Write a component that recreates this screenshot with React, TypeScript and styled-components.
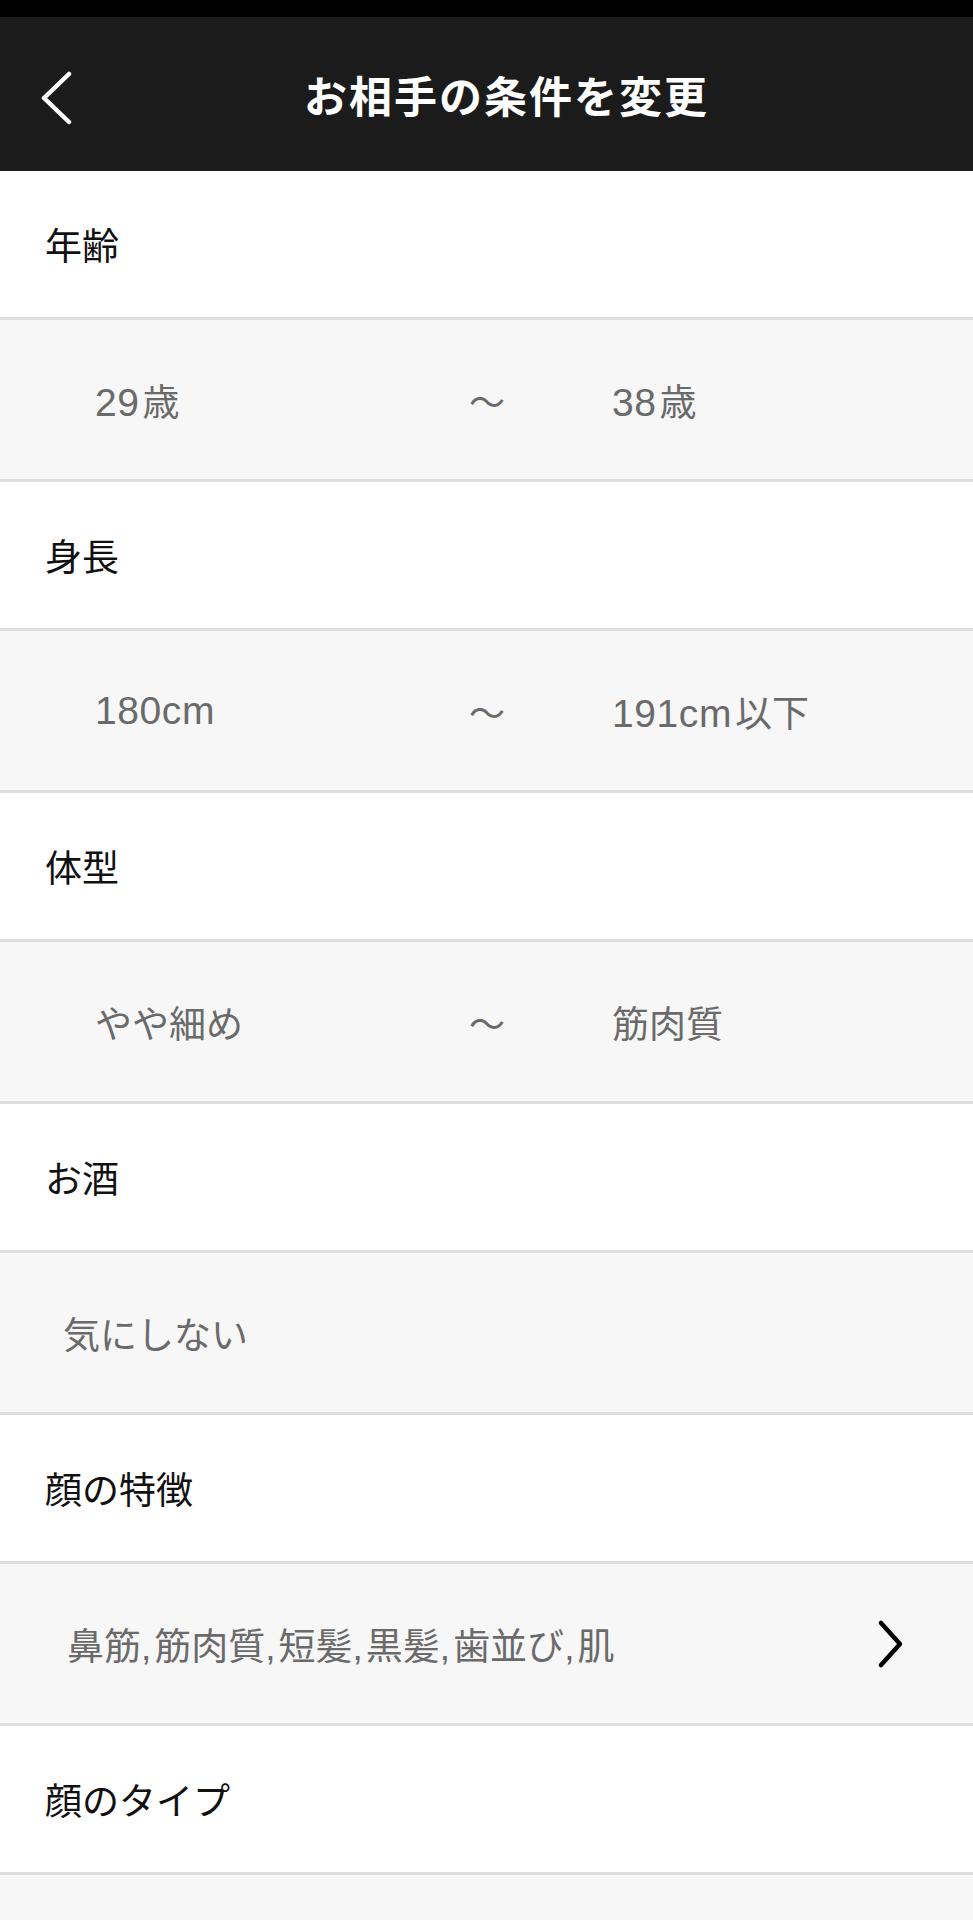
import React from "react";
import styled, { createGlobalStyle } from "styled-components";

const GlobalStyle = createGlobalStyle`
  html, body {
    margin: 0;
    padding: 0;
    background: #f7f7f7;
  }
  body {
    font-family: "Liberation Sans", "Noto Sans CJK JP", sans-serif;
  }
  * { box-sizing: border-box; }
`;

const Page = styled.div`
  width: 973px;
  min-height: 1920px;
  background: #f7f7f7;
  display: flex;
  flex-direction: column;
`;

const StatusBar = styled.div`
  height: 17px;
  background: #000;
`;

const Header = styled.header`
  height: 154px;
  background: #1b1b1b;
  display: grid;
  grid-template-columns: 130px 1fr 90px;
  align-items: center;
`;

const BackButton = styled.button`
  background: none;
  border: none;
  padding: 0 0 0 38px;
  height: 100%;
  display: flex;
  align-items: center;
  cursor: pointer;
  svg { margin-top: 8px; }
`;

const Title = styled.h1`
  margin: 0;
  text-align: center;
  color: #fff;
  font-family: "Noto Sans CJK JP", sans-serif;
  font-weight: 700;
  font-size: 43px;
  letter-spacing: 2px;
  line-height: 1;
`;

const LabelRow = styled.div`
  height: 149px;
  background: #fff;
  border-bottom: 3px solid #dedede;
  display: flex;
  align-items: center;
  padding-left: 45px;
  font-size: 37px;
  color: #111;
  font-family: "Noto Sans CJK JP", sans-serif;
`;

const ValueRow = styled.div<{ $indent: number }>`
  height: 162px;
  background: #f7f7f7;
  border-bottom: 3px solid #dedede;
  display: flex;
  align-items: center;
  padding-left: ${(p) => p.$indent}px;
  padding-right: 68px;
  font-size: 37px;
  color: #6a6a6a;
`;

const RangeFrom = styled.span`
  width: 374px;
`;

const Tilde = styled.span`
  font-family: "Noto Sans CJK JP", sans-serif;
  font-size: 36px;
  width: 143px;
`;

const RangeTo = styled.span``;

const Num = styled.span`
  font-family: "Liberation Sans", sans-serif;
  font-size: 39px;
  letter-spacing: 0.6px;
  margin-right: 3px;
`;

const SingleValue = styled.span`
  flex: 1;
  font-family: "Noto Sans CJK JP", sans-serif;
`;

const Comma = styled.span`
  font-family: "Liberation Sans", sans-serif;
  margin-right: 3px;
`;

const Chevron = () => (
  <svg width="30" height="50" viewBox="0 0 30 50" fill="none">
    <polyline
      points="6,4 25,25 6,46"
      stroke="#000"
      strokeWidth="4.5"
      strokeLinecap="round"
      strokeLinejoin="round"
    />
  </svg>
);

const BackIcon = () => (
  <svg width="34" height="54" viewBox="0 0 34 54" fill="none">
    <polyline
      points="31,3 6,27 31,51"
      stroke="#fff"
      strokeWidth="4.5"
      strokeLinecap="round"
      strokeLinejoin="round"
    />
  </svg>
);

// Render a value where Latin digits/units use the larger Latin face.
const RangeText = ({ text }: { text: string }) => {
  const m = text.match(/^([0-9a-z]+)(.*)$/);
  if (!m) return <>{text}</>;
  return (
    <>
      <Num>{m[1]}</Num>
      {m[2].trim()}
    </>
  );
};

type Condition =
  | { label: string; kind: "range"; from: string; to: string }
  | { label: string; kind: "single"; values: string[]; indent: number; more?: boolean }
  | { label: string; kind: "empty" };

const conditions: Condition[] = [
  { label: "年齢", kind: "range", from: "29歳", to: "38歳" },
  { label: "身長", kind: "range", from: "180cm", to: "191cm以下" },
  { label: "体型", kind: "range", from: "やや細め", to: "筋肉質" },
  { label: "お酒", kind: "single", values: ["気にしない"], indent: 63 },
  {
    label: "顔の特徴",
    kind: "single",
    values: ["鼻筋", "筋肉質", "短髪", "黒髪", "歯並び", "肌"],
    indent: 67,
    more: true,
  },
  { label: "顔のタイプ", kind: "empty" },
];

export default function App() {
  return (
    <>
      <GlobalStyle />
      <Page>
        <StatusBar />
        <Header>
          <BackButton aria-label="戻る">
            <BackIcon />
          </BackButton>
          <Title>お相手の条件を変更</Title>
          <div />
        </Header>
        {conditions.map((c) => (
          <React.Fragment key={c.label}>
            <LabelRow>{c.label}</LabelRow>
            {c.kind === "range" && (
              <ValueRow $indent={95}>
                <RangeFrom>
                  <RangeText text={c.from} />
                </RangeFrom>
                <Tilde>～</Tilde>
                <RangeTo>
                  <RangeText text={c.to} />
                </RangeTo>
              </ValueRow>
            )}
            {c.kind === "single" && (
              <ValueRow $indent={c.indent}>
                <SingleValue>
                  {c.values.map((v, i) => (
                    <React.Fragment key={v}>
                      {i > 0 && <Comma>,</Comma>}
                      {v}
                    </React.Fragment>
                  ))}
                </SingleValue>
                {c.more && <Chevron />}
              </ValueRow>
            )}
          </React.Fragment>
        ))}
      </Page>
    </>
  );
}
